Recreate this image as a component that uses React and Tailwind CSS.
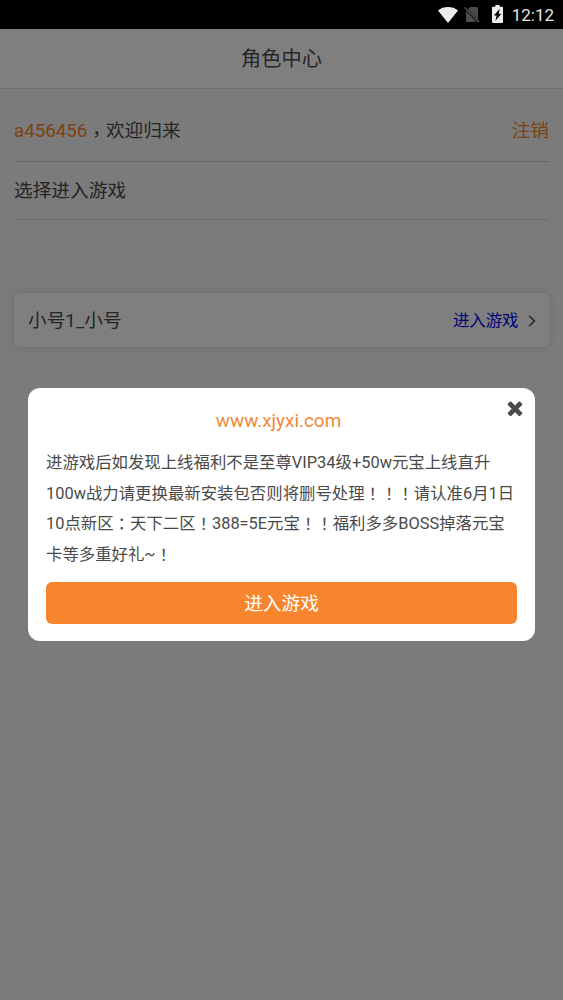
import React, { useState } from "react";

const NOTICE = [
  "进游戏后如发现上线福利不是至尊VIP34级+50w元宝上线直升",
  "100w战力请更换最新安装包否则将删号处理！！！请认准6月1日",
  "10点新区：天下二区！388=5E元宝！！福利多多BOSS掉落元宝",
  "卡等多重好礼~！",
];

// Full-width punctuation sits in the middle of its box, so it takes the TC face
const Text = ({ children }) =>
  children.split(/([：！]+)/).map((part, i) =>
    /[：！]/.test(part) ? (
      <span key={i} className="relative top-px font-['Noto_Sans_CJK_TC',sans-serif] leading-none">{part}</span>
    ) : (
      part
    )
  );

const StatusBar = () => (
  <div className="h-[29px] shrink-0 bg-black flex items-center justify-end pr-[9px] text-white">
    <svg className="w-[20px] h-[16px] mr-[6px]" viewBox="0 0 20 16" fill="#ececec">
      <path d="M10 16 0 3.4C2.8 1.2 6.2 0 10 0s7.2 1.2 10 3.4z" />
    </svg>
    <svg className="w-[16px] h-[17px] mr-[12px]" viewBox="0 0 16 17">
      <path d="M6 1h7.2q.8 0 .8.8V16H2V5z" fill="#4b4b4b" />
      <path d="M0 1 15 16.5" stroke="#000" strokeWidth="2.6" />
      <path d="M.6 1.4 15 16" stroke="#626262" strokeWidth="1.2" />
    </svg>
    <svg className="relative -top-px w-[11px] h-[18px] mr-[9px]" viewBox="0 0 11 18">
      <path d="M3.4 0h4.2v1.8H10q1 0 1 1V17q0 1-1 1H1q-1 0-1-1V2.8q0-1 1-1h2.4z" fill="#ececec" />
      <path d="M7.9 3.8 1.8 10.4h2.7l-1 5.4L9.3 8.8H6.6z" fill="#000" />
    </svg>
    <span className="text-[17px] leading-[29px] pt-[2px] text-[#e6e6e6]">12:12</span>
  </div>
);

const Modal = ({ onClose }) => (
  <div className="absolute inset-x-0 bottom-0 top-[29px] bg-black/50 px-[28px] pt-[359px]">
    <div className="relative h-[253px] rounded-[12px] bg-white px-[18px] pt-[17px]">
      <button className="absolute top-[9px] right-[9px]" onClick={onClose}>
        <svg className="w-[22px] h-[22px]" viewBox="0 0 1792 1792" fill="#4a4a4a">
          <path d="M1490 1322q0 40-28 68l-136 136q-28 28-68 28t-68-28l-294-294-294 294q-28 28-68 28t-68-28l-136-136q-28-28-28-68t28-68l294-294-294-294q-28-28-28-68t28-68l136-136q28-28 68-28t68 28l294 294 294-294q28-28 68-28t68 28l136 136q28 28 28 68t-28 68l-294 294 294 294q28 28 28 68z" />
        </svg>
      </button>
      <h2 className="pr-[6px] text-center text-[18.9px] leading-[32px] text-[#f0883a]">www.xjyxi.com</h2>
      <div className="mt-[11.4px] text-[16.4px] leading-[30.4px] text-[#4a4a4a]">
        {NOTICE.map((line) => (
          <p key={line} className="h-[30.4px] whitespace-nowrap"><Text>{line}</Text></p>
        ))}
      </div>
      <button className="mt-[12px] block h-[42px] w-full rounded-[6px] bg-[#f7852d] text-[18.7px] leading-[45px] text-white">
        进入游戏
      </button>
    </div>
  </div>
);

const App = () => {
  const [open, setOpen] = useState(true);

  return (
    <div className="relative flex h-[1000px] w-full flex-col overflow-hidden bg-[#f6f6f6] text-[#4a4a4a] font-[Roboto,'Noto_Sans_CJK_SC',sans-serif]">
      <StatusBar />
      <header className="h-[60px] shrink-0 border-b border-[#d8d8d8] bg-white text-center text-[20.2px] leading-[60px]">
        角色中心
      </header>
      <main className="px-[14px] text-[18.7px]">
        <div className="mt-[12px] flex h-[61px] items-center justify-between border-b border-[#d2d2d2] pt-px">
          <p>
            <span className="text-[#f7852d]">a456456</span>
            <span className="relative top-[4px] font-['Noto_Sans_CJK_TC',sans-serif] leading-none">，</span>
            欢迎归来
          </p>
          <button className="text-[#f7852d]">注销</button>
        </div>
        <div className="flex h-[58px] items-center border-b border-[#d8d8d8] pt-px">选择进入游戏</div>
        <div className="mt-[73px] flex h-[54px] items-center justify-between rounded-[6px] bg-white pl-[14px] pr-[13.5px] pt-[2px] shadow-[0_0_8px_rgba(0,0,0,0.12)]">
          <span>小号1_小号</span>
          <a className="flex items-center text-[16.4px] text-[#0000ee]">
            进入游戏
            <svg className="ml-[9px] h-[12px] w-[8px]" viewBox="0 0 8 12" fill="none" stroke="#4a4a4a" strokeWidth="1.6">
              <path d="M1.2 1 6.4 6 1.2 11" />
            </svg>
          </a>
        </div>
      </main>
      {open && <Modal onClose={() => setOpen(false)} />}
    </div>
  );
};

export default App;
